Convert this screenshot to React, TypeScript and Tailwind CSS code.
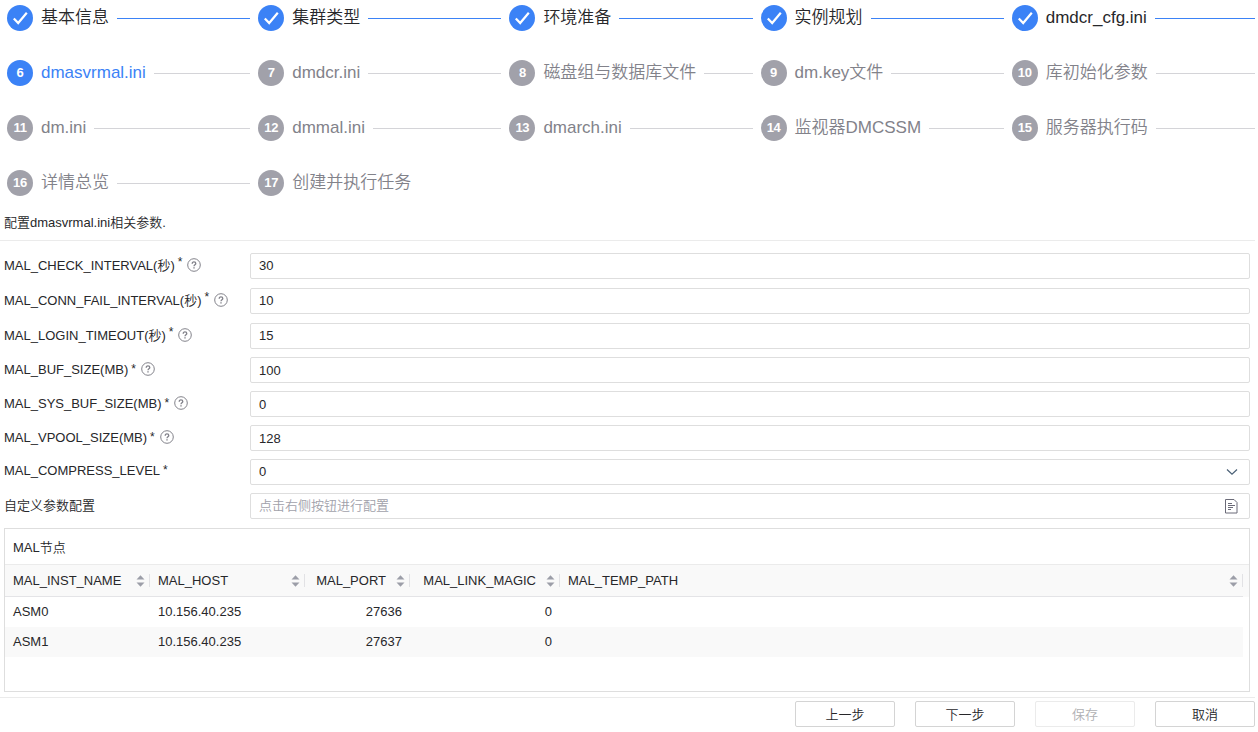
import React, { useState } from "react";

type StepStatus = "done" | "active" | "wait";

interface Field {
  name: string;
  label: string;
  value: string;
  required?: boolean;
  help?: boolean;
  // labels with a CJK unit carry a raised asterisk
  unit?: boolean;
  rowClass: string;
  labelClass: string;
  inputClass: string;
  type?: "select" | "custom";
}

const steps = [
  "基本信息",
  "集群类型",
  "环境准备",
  "实例规划",
  "dmdcr_cfg.ini",
  "dmasvrmal.ini",
  "dmdcr.ini",
  "磁盘组与数据库文件",
  "dm.key文件",
  "库初始化参数",
  "dm.ini",
  "dmmal.ini",
  "dmarch.ini",
  "监视器DMCSSM",
  "服务器执行码",
  "详情总览",
  "创建并执行任务",
];

const fields: Field[] = [
  { name: "check", label: "MAL_CHECK_INTERVAL(秒)", value: "30", required: true, help: true, unit: true, rowClass: "h-[35px]", labelClass: "pt-[3px]", inputClass: "pb-0.5" },
  { name: "conn", label: "MAL_CONN_FAIL_INTERVAL(秒)", value: "10", required: true, help: true, unit: true, rowClass: "h-[35px]", labelClass: "pt-[3px]", inputClass: "pb-0.5" },
  { name: "login", label: "MAL_LOGIN_TIMEOUT(秒)", value: "15", required: true, help: true, unit: true, rowClass: "h-[34px]", labelClass: "pt-[3px]", inputClass: "pb-0.5" },
  { name: "buf", label: "MAL_BUF_SIZE(MB)", value: "100", required: true, help: true, rowClass: "h-[34px]", labelClass: "pt-[3px]", inputClass: "" },
  { name: "sysbuf", label: "MAL_SYS_BUF_SIZE(MB)", value: "0", required: true, help: true, rowClass: "h-[34px]", labelClass: "pt-[3px]", inputClass: "" },
  { name: "vpool", label: "MAL_VPOOL_SIZE(MB)", value: "128", required: true, help: true, rowClass: "h-[34px]", labelClass: "pt-[3px]", inputClass: "" },
  { name: "compress", label: "MAL_COMPRESS_LEVEL", value: "0", required: true, rowClass: "h-[34px]", labelClass: "pt-[2px]", inputClass: "pb-0.5", type: "select" },
  { name: "custom", label: "自定义参数配置", value: "", rowClass: "h-[34px]", labelClass: "pt-[3px]", inputClass: "pb-0.5", type: "custom" },
];

const columns = [
  { key: "name", title: "MAL_INST_NAME", width: "w-[145px]", right: false },
  { key: "host", title: "MAL_HOST", width: "w-[155px]", right: false },
  { key: "port", title: "MAL_PORT", width: "w-[105px]", right: true },
  { key: "magic", title: "MAL_LINK_MAGIC", width: "w-[150px]", right: true },
  { key: "path", title: "MAL_TEMP_PATH", width: "w-[683px]", right: false },
];

const nodes: Record<string, string>[] = [
  { name: "ASM0", host: "10.156.40.235", port: "27636", magic: "0", path: "" },
  { name: "ASM1", host: "10.156.40.235", port: "27637", magic: "0", path: "" },
];

const CheckIcon = () => (
  <svg width="26" height="26" viewBox="0 0 26 26" fill="none" stroke="#fff" strokeWidth="2.2">
    <path d="M6.8 13.4l4.4 4.6L19.8 7.8" />
  </svg>
);

const HelpIcon = () => (
  <svg width="14" height="14" viewBox="0 0 14 14" fill="none" stroke="#82828a">
    <circle cx="7" cy="7" r="6.3" />
    <path d="M5.2 5.7c0-1.2.8-1.9 1.8-1.9s1.8.7 1.8 1.6c0 1.2-1.8 1.4-1.8 2.8" strokeWidth="1.3" />
    <path d="M7 9.2v1.4" strokeWidth="1.4" />
  </svg>
);

const SortIcon = () => (
  <svg className="shrink-0" width="9" height="12" viewBox="0 0 9 12" fill="#9c9ea8">
    <path d="M4.5 0.3L8.5 4.5h-8z" />
    <path d="M4.5 11.7L0.5 7.5h8z" />
  </svg>
);

const DocIcon = () => (
  <svg width="14" height="15" viewBox="0 0 14 15" fill="none" stroke="#6b6b78">
    <path d="M1.5.5h8.5l3 3v10.5H1.5z" />
    <path d="M4 4.5h4M4 6.5h7M4 8.5h5M4 10.5h3" />
  </svg>
);

const ChevronIcon = () => (
  <svg width="12" height="8" viewBox="0 0 12 8" fill="none" stroke="#4a6076" strokeWidth="1.2">
    <path d="M1 1.5l5 4.7 5-4.7" />
  </svg>
);

const Step: React.FC<{ index: number; title: string; status: StepStatus; last: boolean }> = ({ index, title, status, last }) => {
  const circle = status === "wait" ? "bg-[#a1a1aa]" : "bg-[#3b82f6]";
  const text = status === "done" ? "text-[#27272a]" : status === "active" ? "text-[#3b82f6]" : "text-[#82828a]";
  return (
    <li className="flex h-[55px] w-1/5 items-start gap-2 pr-2">
      <span className={`flex size-[26px] shrink-0 items-center justify-center rounded-full text-[13px] font-bold tracking-tight text-white ${circle}`}>
        {status === "done" ? <CheckIcon /> : index}
      </span>
      <span className={`shrink-0 text-[17px] leading-[25px] font-[350] whitespace-nowrap ${text}`}>{title}</span>
      {!last && <span className={`mt-[13px] h-px flex-1 ${status === "done" ? "bg-[#3b82f6]" : "bg-[#d4d4d8]"}`} />}
    </li>
  );
};

const App: React.FC = () => {
  const [current] = useState(5);
  const [values, setValues] = useState<Record<string, string>>(
    Object.fromEntries(fields.map((f) => [f.name, f.value]))
  );

  const getStatus = (i: number): StepStatus => {
    if (i < current) return "done";
    return i === current ? "active" : "wait";
  };

  return (
    <div className="h-[732px] w-[1258px] overflow-hidden bg-white font-['Liberation_Sans','Noto_Sans_CJK_SC',sans-serif] text-[13px] leading-5 font-[350] text-[#27272a]">
      {/* Steps */}
      <ol className="ml-[7px] flex h-[207px] w-[1256px] flex-wrap content-start pt-[5px]">
        {steps.map((title, i) => (
          <Step key={title} index={i + 1} title={title} status={getStatus(i)} last={i === steps.length - 1} />
        ))}
      </ol>

      <div className="h-[34px] w-[1255px] border-b border-[#ebebeb] pt-[6px] pl-1">配置dmasvrmal.ini相关参数.</div>

      {/* Parameters */}
      <form className="mt-3 pl-1">
        {fields.map((field) => (
          <div key={field.name} className={`flex items-start ${field.rowClass}`}>
            <label className={`flex h-[26px] w-[246px] items-start whitespace-nowrap ${field.labelClass}`}>
              {field.label}
              {field.required && <span className={field.unit ? "-mt-[2px] ml-[3px] text-xs" : "mt-px ml-[3px] text-xs"}>*</span>}
              {field.help && <span className="mt-[2px] ml-[5px]"><HelpIcon /></span>}
            </label>
            <div className="flex h-[26px] w-[1000px] items-center rounded-[2px] border border-[#dedede] pr-[11px] pl-2">
              <input
                className={`h-6 min-w-0 flex-1 bg-transparent outline-none placeholder:text-[#a1a1aa] ${field.inputClass}`}
                value={values[field.name]}
                placeholder={field.type === "custom" ? "点击右侧按钮进行配置" : undefined}
                readOnly={field.type !== undefined}
                onChange={(e) => setValues({ ...values, [field.name]: e.target.value })}
              />
              {field.type === "select" && <ChevronIcon />}
              {field.type === "custom" && <DocIcon />}
            </div>
          </div>
        ))}
      </form>

      {/* MAL nodes */}
      <section className="mt-px ml-1 h-[164px] w-[1246px] border border-[#dedede]">
        <h2 className="h-[35px] pt-[9px] pl-2">MAL节点</h2>
        <div className="h-[33px] border-t border-[#ebebeb] bg-[#f9f9f9]">
          <div className="flex h-8 w-[1238px] border-b border-[#e4e4e7]">
            {columns.map((col) => (
              <div key={col.key} className={`flex items-center pl-2 ${col.width}`}>
                <span className={`flex-1 whitespace-nowrap ${col.right ? "pr-[10px] text-right" : ""}`}>{col.title}</span>
                <SortIcon />
                <span className="ml-1 h-[13px] w-px bg-[#e2e2e5]" />
              </div>
            ))}
          </div>
        </div>
        {nodes.map((node, i) => (
          <div key={node.name} className={`flex h-[30px] w-[1238px] items-center ${i % 2 ? "bg-[#f9f9f9]" : ""}`}>
            {columns.map((col) => (
              <span key={col.key} className={`px-2 ${col.width} ${col.right ? "text-right" : ""}`}>{node[col.key]}</span>
            ))}
          </div>
        ))}
      </section>

      {/* Footer buttons */}
      <footer className="mt-[5px] flex w-[1255px] justify-end gap-5 border-t border-[#ebebeb] pt-[3px]">
        <button className="h-[26px] w-[100px] rounded-[2px] border border-[#d4d4d4] pt-px">上一步</button>
        <button className="h-[26px] w-[100px] rounded-[2px] border border-[#d4d4d4] pt-px">下一步</button>
        <button disabled className="h-[26px] w-[100px] rounded-[2px] border border-[#ebebeb] pt-px text-[#b0b0b3]">保存</button>
        <button className="h-[26px] w-[100px] rounded-[2px] border border-[#d4d4d4] pt-px">取消</button>
      </footer>
    </div>
  );
};

export default App;
